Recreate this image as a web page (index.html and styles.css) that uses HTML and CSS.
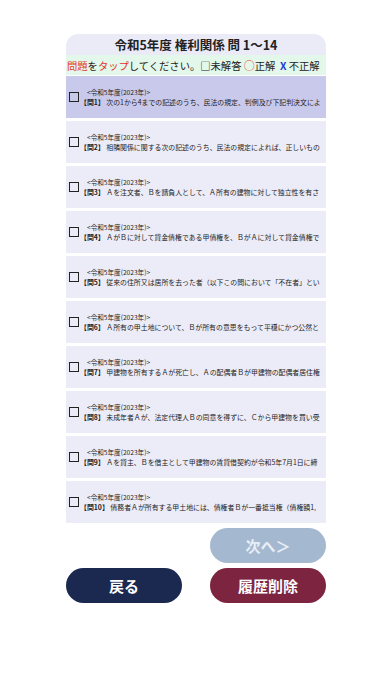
FILE: index.html
```html
<!DOCTYPE html>
<html lang="ja">
<head>
    <meta charset="UTF-8">
    <meta name="viewport" content="width=device-width, initial-scale=1.0">
    <title>権利関係 問題一覧</title>
    <link rel="stylesheet" href="styles.css">
</head>
<body>

    <!-- 問題一覧パネル -->
    <div class="panel">
        <div class="panel-title">令和5年度 権利関係 問 1〜14</div>
        <div class="panel-guide">
            <span class="red">問題</span>を<span class="red">タップ</span>してください。□未解答&nbsp;<span class="circle">○</span>正解&nbsp;&nbsp;<span class="cross">X</span>&nbsp;不正解
        </div>

        <div class="question-list">
            <div class="question selected">
                <span class="check"></span>
                <div class="question-body">
                    <div class="question-year">&lt;令和5年度(2023年)&gt;</div>
                    <div class="question-text"><b>【問1】</b> 次の1から4までの記述のうち、民法の規定、判例及び下記判決文によ</div>
                </div>
            </div>
            <div class="question">
                <span class="check"></span>
                <div class="question-body">
                    <div class="question-year">&lt;令和5年度(2023年)&gt;</div>
                    <div class="question-text"><b>【問2】</b> 相隣関係に関する次の記述のうち、民法の規定によれば、正しいもの</div>
                </div>
            </div>
            <div class="question">
                <span class="check"></span>
                <div class="question-body">
                    <div class="question-year">&lt;令和5年度(2023年)&gt;</div>
                    <div class="question-text"><b>【問3】</b> Ａを注文者、Ｂを請負人として、Ａ所有の建物に対して独立性を有さ</div>
                </div>
            </div>
            <div class="question">
                <span class="check"></span>
                <div class="question-body">
                    <div class="question-year">&lt;令和5年度(2023年)&gt;</div>
                    <div class="question-text"><b>【問4】</b> ＡがＢに対して貸金債権である甲債権を、ＢがＡに対して貸金債権で</div>
                </div>
            </div>
            <div class="question">
                <span class="check"></span>
                <div class="question-body">
                    <div class="question-year">&lt;令和5年度(2023年)&gt;</div>
                    <div class="question-text"><b>【問5】</b> 従来の住所又は居所を去った者（以下この問において「不在者」とい</div>
                </div>
            </div>
            <div class="question">
                <span class="check"></span>
                <div class="question-body">
                    <div class="question-year">&lt;令和5年度(2023年)&gt;</div>
                    <div class="question-text"><b>【問6】</b> Ａ所有の甲土地について、Ｂが所有の意思をもって平穏にかつ公然と</div>
                </div>
            </div>
            <div class="question">
                <span class="check"></span>
                <div class="question-body">
                    <div class="question-year">&lt;令和5年度(2023年)&gt;</div>
                    <div class="question-text"><b>【問7】</b> 甲建物を所有するＡが死亡し、Ａの配偶者Ｂが甲建物の配偶者居住権</div>
                </div>
            </div>
            <div class="question">
                <span class="check"></span>
                <div class="question-body">
                    <div class="question-year">&lt;令和5年度(2023年)&gt;</div>
                    <div class="question-text"><b>【問8】</b> 未成年者Ａが、法定代理人Ｂの同意を得ずに、Ｃから甲建物を買い受</div>
                </div>
            </div>
            <div class="question">
                <span class="check"></span>
                <div class="question-body">
                    <div class="question-year">&lt;令和5年度(2023年)&gt;</div>
                    <div class="question-text"><b>【問9】</b> Ａを貸主、Ｂを借主として甲建物の賃貸借契約が令和5年7月1日に締</div>
                </div>
            </div>
            <div class="question">
                <span class="check"></span>
                <div class="question-body">
                    <div class="question-year">&lt;令和5年度(2023年)&gt;</div>
                    <div class="question-text"><b>【問10】</b> 債務者Ａが所有する甲土地には、債権者Ｂが一番抵当権（債権額1,</div>
                </div>
            </div>
        </div>
    </div>

    <!-- ボタン -->
    <div class="buttons">
        <button class="btn btn-next">次へ＞</button>
        <button class="btn btn-back">戻る</button>
        <button class="btn btn-clear">履歴削除</button>
    </div>

</body>
</html>
```

FILE: styles.css
```css
/* 全体 */
body {
    margin: 0;
    padding-top: 34px;
    background-color: #ffffff;
    font-family: "Noto Sans CJK JP", "Noto Sans", sans-serif;
    color: #222222;
}

/* 問題一覧パネル */
.panel {
    width: 260px;
    margin: 0 auto;
    border-radius: 12px 12px 0 0;
    overflow: hidden;
}

.panel-title {
    height: 21px;
    line-height: 22px;
    text-align: center;
    font-size: 12.5px;
    font-weight: bold;
    background-color: #ebebf7;
}

.panel-guide {
    height: 20px;
    line-height: 20px;
    font-size: 10.3px;
    white-space: nowrap;
    padding-left: 1px;
    background-color: #e3f7ea;
}

.red {
    color: #e53228;
}

.circle {
    color: #e8452a;
    font-size: 11px;
}

.cross {
    color: #1b3bd6;
    font-weight: bold;
}

/* 問題リスト */
.question-list {
    display: flex;
    flex-direction: column;
    gap: 3px;
    padding-top: 1px;
}

.question {
    display: flex;
    align-items: center;
    height: 42px;
    padding-left: 3px;
    background-color: #ececf8;
    overflow: hidden;
    white-space: nowrap;
}

.question.selected {
    background-color: #c9c9ec;
}

.check {
    flex: none;
    width: 8px;
    height: 8px;
    border: 1.5px solid #222222;
    margin-right: 1px;
}

.question-body {
    display: flex;
    flex-direction: column;
    min-width: 0;
}

.question-year {
    font-size: 6.6px;
    line-height: 10px;
    padding-left: 7px;
}

.question-text {
    font-size: 6.9px;
    line-height: 11px;
}

/* ボタン */
.buttons {
    width: 260px;
    margin: 5px auto 0;
    display: grid;
    grid-template-columns: 116px 116px;
    justify-content: space-between;
    row-gap: 5px;
}

.btn {
    height: 35px;
    border: none;
    border-radius: 18px;
    font-family: inherit;
    font-size: 15px;
    font-weight: bold;
    color: #ffffff;
    cursor: pointer;
}

.btn-next {
    grid-column: 2;
    background-color: #a4b9cf;
    color: #e8eef5;
}

.btn-back {
    background-color: #1b2951;
}

.btn-clear {
    background-color: #7d2540;
}
```
